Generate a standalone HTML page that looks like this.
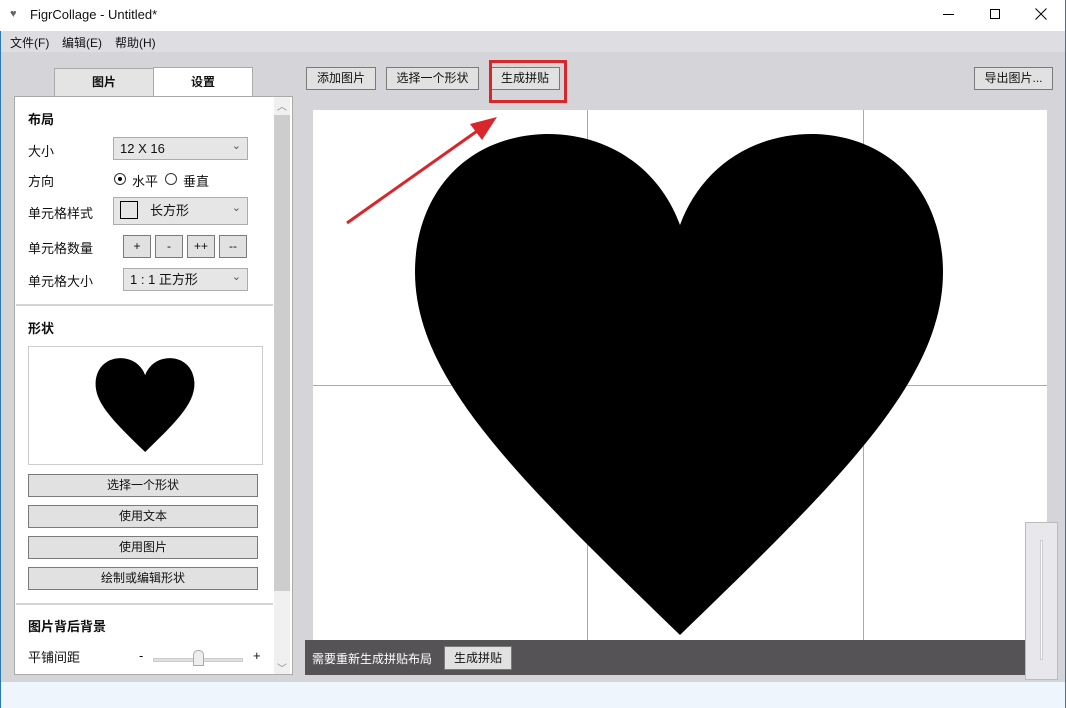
<!DOCTYPE html>
<html><head><meta charset="utf-8"><style>
*{box-sizing:border-box;margin:0;padding:0}
body{width:1066px;height:708px;position:relative;overflow:hidden;background:#d5d4d9;font-family:"Liberation Sans","Noto Sans CJK SC",sans-serif;font-size:13px;color:#111}
.a{position:absolute}
.btn{position:absolute;background:#e1e1e1;border:1px solid #7a7a7a;text-align:center;font-size:12px;line-height:20px}
.lbl{position:absolute;left:28px;font-size:13px}
.dd{position:absolute;background:#e6e6e6;border:1px solid #acacac;font-size:13px;padding-left:6px;line-height:22px}
.dd:after{content:"⌄";position:absolute;right:6px;top:-3px;font-size:11px;color:#555}
</style></head><body>
<div class="a" style="left:0;top:0;width:1066px;height:31px;background:#fff"></div>
<div class="a" style="left:10px;top:8px;font-size:11px;color:#666">♥</div>
<div class="a" style="left:30px;top:7px;font-size:13px">FigrCollage - Untitled*</div>
<div class="a" style="left:943px;top:14px;width:11px;height:1px;background:#000"></div>
<div class="a" style="left:990px;top:9px;width:10px;height:10px;border:1px solid #000"></div>
<svg class="a" style="left:1035px;top:8px" width="12" height="12"><path d="M0.5,0.5L11.5,11.5M11.5,0.5L0.5,11.5" stroke="#000" stroke-width="1"/></svg>
<div class="a" style="left:0;top:31px;width:1066px;height:21px;background:#dedde2"></div>
<div class="a" style="left:10px;top:34px;font-size:12px">文件(F)</div>
<div class="a" style="left:62px;top:34px;font-size:12px">编辑(E)</div>
<div class="a" style="left:115px;top:34px;font-size:12px">帮助(H)</div>
<div class="a" style="left:0;top:682px;width:1066px;height:26px;background:#eef5fc"></div>
<div class="a" style="left:0;top:31px;width:1px;height:677px;background:#2b78b4"></div>
<div class="a" style="left:1065px;top:0;width:1px;height:708px;background:#2b78b4"></div>

<div class="a" style="left:54px;top:68px;width:100px;height:29px;background:#e4e4e4;border:1px solid #aaa;text-align:center;line-height:26px;font-weight:bold;font-size:12px">图片</div>
<div class="a" style="left:153px;top:67px;width:100px;height:30px;background:#fff;border:1px solid #aaa;border-bottom:none;text-align:center;line-height:28px;font-weight:bold;font-size:12px">设置</div>
<div class="a" style="left:14px;top:96px;width:279px;height:579px;background:#fff;border:1px solid #aaa"></div>
<div class="a" style="left:274px;top:97px;width:16px;height:577px;background:#f0f0f0"></div>
<div class="a" style="left:274px;top:115px;width:16px;height:476px;background:#cdcdcd"></div>
<div class="a" style="left:277px;top:98px;font-size:10px;color:#888">︿</div>
<div class="a" style="left:277px;top:660px;font-size:10px;color:#888">﹀</div>

<div class="lbl" style="top:109px;font-weight:bold">布局</div>
<div class="lbl" style="top:141px">大小</div>
<div class="dd" style="left:113px;top:137px;width:135px;height:23px">12 X 16</div>
<div class="lbl" style="top:171px">方向</div>
<div class="a" style="left:114px;top:173px;width:12px;height:12px;border:1px solid #333;border-radius:50%"></div>
<div class="a" style="left:118px;top:177px;width:4px;height:4px;background:#000;border-radius:50%"></div>
<div class="a" style="left:132px;top:171px">水平</div>
<div class="a" style="left:165px;top:173px;width:12px;height:12px;border:1px solid #333;border-radius:50%"></div>
<div class="a" style="left:183px;top:171px">垂直</div>
<div class="lbl" style="top:203px">单元格样式</div>
<div class="dd" style="left:113px;top:197px;width:135px;height:28px;padding-left:36px;line-height:26px">长方形</div>
<div class="a" style="left:120px;top:201px;width:18px;height:18px;border:1px solid #000"></div>
<div class="lbl" style="top:238px">单元格数量</div>
<div class="btn" style="left:123px;top:235px;width:28px;height:23px">+</div>
<div class="btn" style="left:155px;top:235px;width:28px;height:23px">-</div>
<div class="btn" style="left:187px;top:235px;width:28px;height:23px">++</div>
<div class="btn" style="left:219px;top:235px;width:28px;height:23px">--</div>
<div class="lbl" style="top:271px">单元格大小</div>
<div class="dd" style="left:123px;top:268px;width:125px;height:23px">1 : 1 正方形</div>
<div class="a" style="left:16px;top:304px;width:257px;height:2px;background:#d4d4d4"></div>
<div class="lbl" style="top:318px;font-weight:bold">形状</div>
<div class="a" style="left:28px;top:346px;width:235px;height:119px;border:1px solid #ccc;background:#fff"></div>
<svg class="a" style="left:95px;top:358px" width="100" height="94" viewBox="415 133 528 502"><path d="M680,225 C660,170 610,133 545,134 C460,137 415,200 415,272 C415,380 520,480 680,635 C840,480 943,380 943,272 C943,200 898,137 815,134 C750,133 700,170 680,225 Z" fill="#000"/></svg>
<div class="btn" style="left:28px;top:474px;width:230px;height:23px">选择一个形状</div>
<div class="btn" style="left:28px;top:505px;width:230px;height:23px">使用文本</div>
<div class="btn" style="left:28px;top:536px;width:230px;height:23px">使用图片</div>
<div class="btn" style="left:28px;top:567px;width:230px;height:23px">绘制或编辑形状</div>
<div class="a" style="left:16px;top:603px;width:257px;height:2px;background:#d4d4d4"></div>
<div class="lbl" style="top:616px;font-weight:bold">图片背后背景</div>
<div class="lbl" style="top:647px">平铺间距</div>
<div class="a" style="left:139px;top:648px">-</div>
<div class="a" style="left:153px;top:658px;width:90px;height:4px;background:#e0e0e0;border:1px solid #ccc"></div>
<div class="a" style="left:193px;top:650px;width:11px;height:16px;background:#eee;border:1px solid #aaa;border-radius:5px 5px 0 0"></div>
<div class="a" style="left:253px;top:648px">+</div>

<div class="btn" style="left:306px;top:67px;width:70px;height:23px">添加图片</div>
<div class="btn" style="left:386px;top:67px;width:93px;height:23px">选择一个形状</div>
<div class="btn" style="left:490px;top:67px;width:70px;height:23px">生成拼贴</div>
<div class="btn" style="left:974px;top:67px;width:79px;height:23px">导出图片...</div>
<div class="a" style="left:489px;top:60px;width:78px;height:43px;border:3px solid #d9262a"></div>

<div class="a" style="left:313px;top:110px;width:734px;height:565px;background:#fff"></div>
<svg class="a" style="left:0;top:0" width="1066" height="708">
<line x1="587.5" y1="110" x2="587.5" y2="660" stroke="#aaa"/>
<line x1="863.5" y1="110" x2="863.5" y2="660" stroke="#aaa"/>
<line x1="313" y1="385.5" x2="1047" y2="385.5" stroke="#aaa"/>
<path d="M680,225 C660,170 610,133 545,134 C460,137 415,200 415,272 C415,380 520,480 680,635 C840,480 943,380 943,272 C943,200 898,137 815,134 C750,133 700,170 680,225 Z" fill="#000"/>
<line x1="347" y1="223" x2="480" y2="129" stroke="#d9262a" stroke-width="3"/>
<polygon points="497,117 470,124 482,140" fill="#d9262a"/>
</svg>
<div class="a" style="left:305px;top:640px;width:720px;height:35px;background:#555356"></div>
<div class="a" style="left:312px;top:650px;color:#fff;font-size:12px">需要重新生成拼贴布局</div>
<div class="btn" style="left:444px;top:646px;width:68px;height:24px;line-height:22px">生成拼贴</div>
<div class="a" style="left:1025px;top:522px;width:33px;height:158px;background:#e8e8ec;border:1px solid #bbb"></div>
<div class="a" style="left:1040px;top:540px;width:3px;height:120px;background:#fff;border:1px solid #ccc"></div>
</body></html>
